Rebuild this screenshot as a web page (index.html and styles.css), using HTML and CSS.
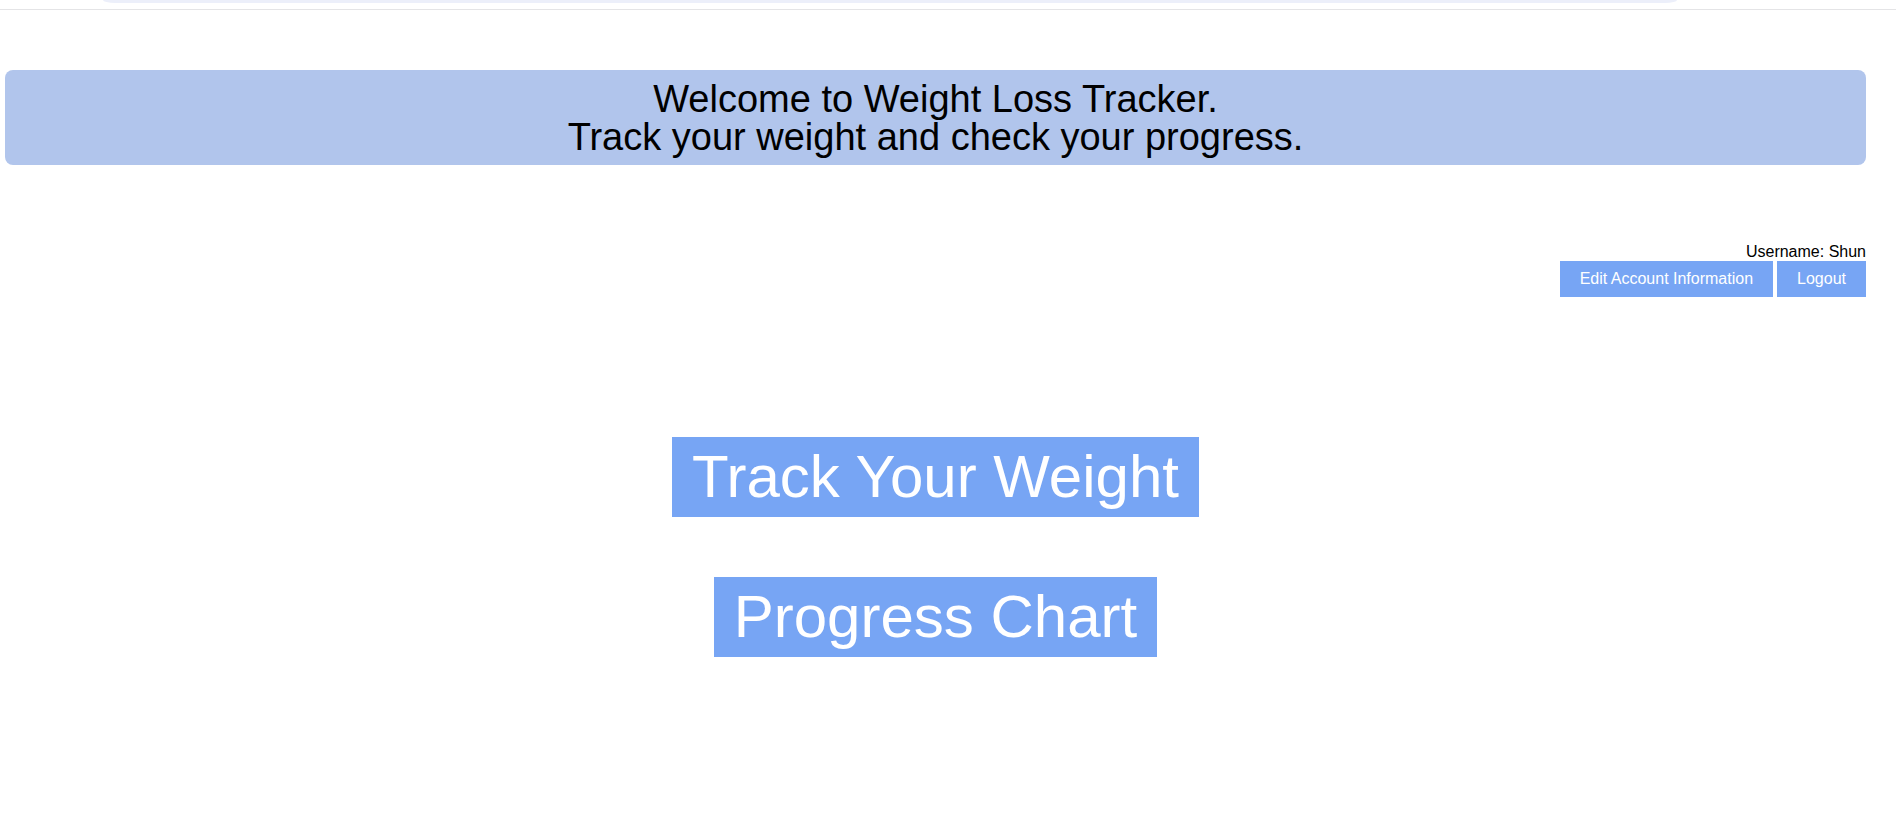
FILE: index.html
```html
<!DOCTYPE html>
<html lang="en">
<head>
<meta charset="utf-8">
<title>Weight Loss Tracker</title>
<link rel="stylesheet" href="styles.css">
</head>
<body>
<div class="topstrip"><div class="topbar"></div></div>
<main class="page">
  <header class="banner">
    <div class="banner-line">Welcome to Weight Loss Tracker.</div>
    <div class="banner-line">Track your weight and check your progress.</div>
  </header>
  <section class="account">
    <div class="username">Username: Shun</div>
    <div class="account-actions">
      <a class="small-btn" href="#">Edit Account Information</a>
      <a class="small-btn" href="#">Logout</a>
    </div>
  </section>
  <nav class="menu">
    <a class="big-btn" href="#">Track Your Weight</a>
    <a class="big-btn" href="#">Progress Chart</a>
  </nav>
</main>
</body>
</html>
```

FILE: styles.css
```css
html, body {
  margin: 0;
  padding: 0;
  background: #ffffff;
}

body {
  font-family: "Liberation Sans", Arial, sans-serif;
  color: #000000;
}

.topstrip {
  height: 9px;
  border-bottom: 1px solid #e4e4e6;
}

.topbar {
  margin-left: 103px;
  width: 1574px;
  height: 3px;
  background: #eceffa;
  border-radius: 0 0 12px 12px / 0 0 3px 3px;
}

.page {
  padding: 0 30px 0 5px;
}

.banner {
  margin-top: 60px;
  padding: 9.5px 0;
  background: #b1c5ec;
  border-radius: 8px;
  text-align: center;
  font-size: 38px;
  line-height: 38px;
}

.account {
  margin-top: 78px;
  display: flex;
  flex-direction: column;
  align-items: flex-end;
}

.username {
  font-size: 16px;
  line-height: 18px;
}

.account-actions {
  display: flex;
  gap: 4px;
}

.small-btn {
  display: block;
  padding: 9px 20px;
  font-size: 16px;
  line-height: 18px;
  color: #ffffff;
  background: #77a5f4;
  text-decoration: none;
}

.menu {
  margin-top: 140px;
  display: flex;
  flex-direction: column;
  align-items: center;
  gap: 60px;
}

.big-btn {
  display: block;
  padding: 5px 20px;
  font-size: 60px;
  line-height: 70px;
  color: #ffffff;
  background: #77a5f4;
  text-decoration: none;
}
```
